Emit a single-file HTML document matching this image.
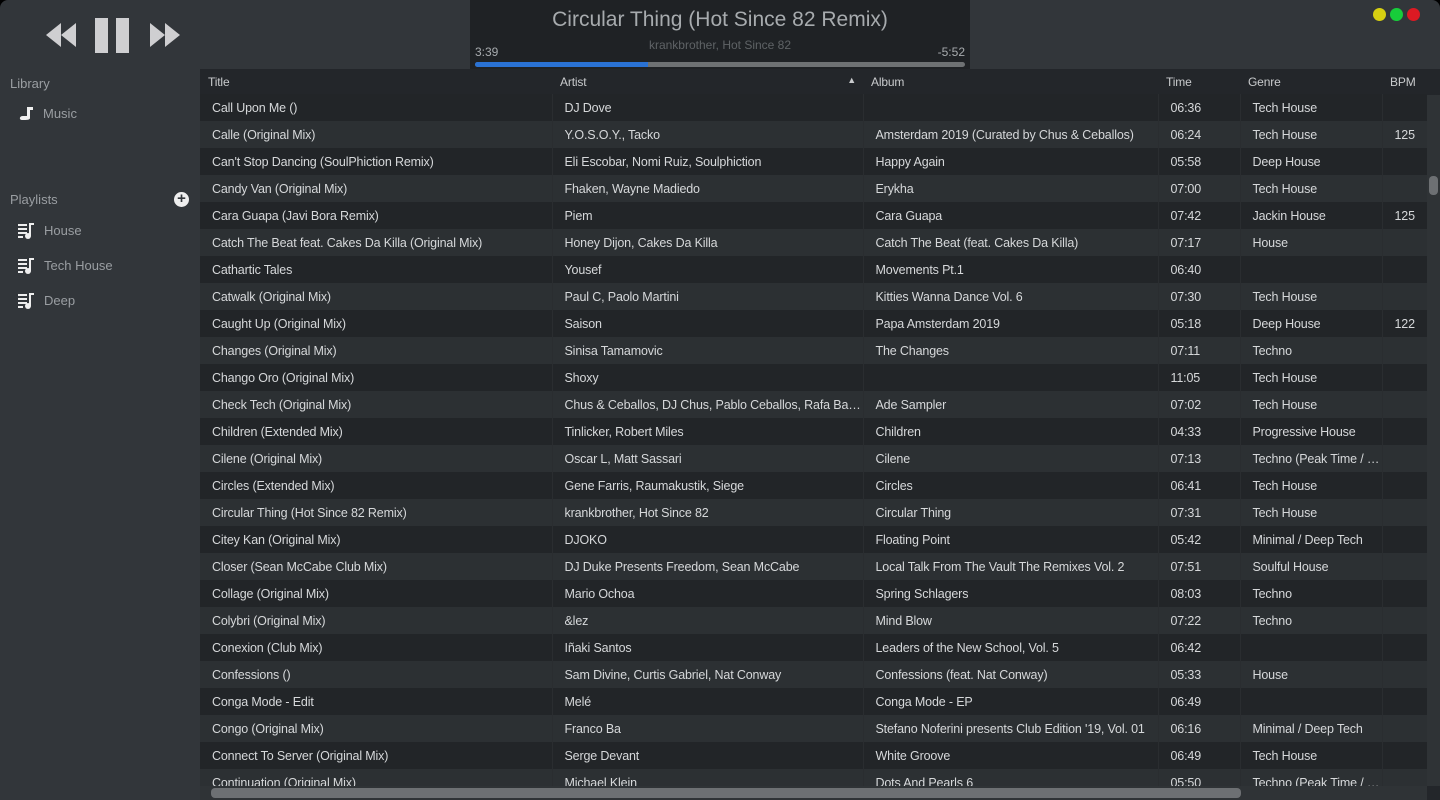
<!DOCTYPE html>
<html><head><meta charset="utf-8"><style>
*{margin:0;padding:0;box-sizing:border-box}
body{width:1440px;height:800px;background:#000;overflow:hidden;font-family:"Liberation Sans",sans-serif;}
#win{position:absolute;left:0;top:0;width:1440px;height:800px;background:#32363a;border-radius:8px 8px 0 0;overflow:hidden}
.side{position:absolute;color:#9a9ea2;font-size:13px}
.now{position:absolute;left:470px;top:0;width:500px;height:69px;background:#1f2225}
table{position:absolute;left:200px;top:69px;border-collapse:collapse;table-layout:fixed;width:1227px}
td,th{height:27px;font-size:12.5px;letter-spacing:-0.15px;color:#d6d8da;white-space:nowrap;overflow:hidden;text-overflow:ellipsis;padding-left:12px;border-left:1px solid #2a2d30;font-weight:normal;text-align:left}
th{height:25px;padding-left:8px;color:#c9cbcd;background:#23262a;border-left:none;font-size:12px}
td:first-child{border-left:none}
tr:nth-child(even) td{background:#222528}
tr:nth-child(odd) td{background:#2c3033}
</style></head><body><div id="win">
<svg style="position:absolute;left:46px;top:18px" width="136" height="36">
<polygon points="0,17 15,5 15,29" fill="#cfcfd1"/><polygon points="15,17 30,5 30,29" fill="#cfcfd1"/>
<rect x="49" y="0" width="13" height="35" fill="#cfcfd1"/><rect x="70" y="0" width="13" height="35" fill="#cfcfd1"/>
<polygon points="104,5 119,17 104,29" fill="#cfcfd1"/><polygon points="119,5 134,17 119,29" fill="#cfcfd1"/>
</svg>
<div class="now">
<div style="position:absolute;left:0;width:500px;top:8px;text-align:center;font-size:21px;color:#a7abae">Circular Thing (Hot Since 82 Remix)</div>
<div style="position:absolute;left:0;width:500px;top:38px;text-align:center;font-size:12px;color:#5f6366">krankbrother, Hot Since 82</div>
<div style="position:absolute;left:5px;top:45px;font-size:12px;color:#a7abae">3:39</div>
<div style="position:absolute;right:5px;top:45px;font-size:12px;color:#a7abae">-5:52</div>
<div style="position:absolute;left:5px;top:62px;width:490px;height:5px;background:#6e7173;border-radius:3px"><div style="width:173px;height:5px;background:#2a72d4;border-radius:3px 0 0 3px"></div></div>
</div>
<div style="position:absolute;left:1373px;top:8px;width:13px;height:13px;border-radius:50%;background:#d6cf11"></div>
<div style="position:absolute;left:1390px;top:8px;width:13px;height:13px;border-radius:50%;background:#17cd3a"></div>
<div style="position:absolute;left:1407px;top:8px;width:13px;height:13px;border-radius:50%;background:#dc1a23"></div>
<div class="side" style="left:10px;top:76px">Library</div>
<svg style="position:absolute;left:18px;top:105px" width="16" height="16"><path d="M4 15 C1 15 1 11 5 11 L9 11 L9 2 L15 2 L15 5 L12 5 L12 13 C12 15 9 15 4 15Z" fill="#f0f0f0"/></svg>
<div class="side" style="left:43px;top:106px">Music</div>
<div class="side" style="left:10px;top:192px">Playlists</div>
<div style="position:absolute;left:174px;top:192px;width:15px;height:15px;border-radius:50%;background:#eee;color:#32363a;font-size:15px;line-height:14px;text-align:center;font-weight:bold">+</div>
<svg width="0" height="0" style="position:absolute"><defs><g id="pl"><rect x="0" y="1" width="9" height="2" fill="#eee"/><rect x="0" y="5" width="9" height="2" fill="#eee"/><rect x="0" y="9" width="9" height="2" fill="#eee"/><rect x="0" y="13" width="5" height="2" fill="#eee"/><rect x="11" y="0" width="2" height="13" fill="#eee"/><rect x="11" y="0" width="5" height="2" fill="#eee"/><circle cx="10" cy="13" r="3" fill="#eee"/></g></defs></svg>
<svg style="position:absolute;left:18px;top:223px" width="17" height="17"><use href="#pl"/></svg>
<div class="side" style="left:44px;top:223px">House</div>
<svg style="position:absolute;left:18px;top:258px" width="17" height="17"><use href="#pl"/></svg>
<div class="side" style="left:44px;top:258px">Tech House</div>
<svg style="position:absolute;left:18px;top:293px" width="17" height="17"><use href="#pl"/></svg>
<div class="side" style="left:44px;top:293px">Deep</div>
<div style="position:absolute;left:200px;top:69px;width:1240px;height:731px;background:#23262a"></div>
<table>
<colgroup><col style="width:352px"><col style="width:311px"><col style="width:295px"><col style="width:82px"><col style="width:142px"><col style="width:45px"></colgroup>
<tr><th>Title</th><th>Artist<span style="float:right;margin-right:7px;font-size:9px">▲</span></th><th>Album</th><th>Time</th><th>Genre</th><th>BPM</th></tr>
<tr><td>Call Upon Me ()</td><td>DJ Dove</td><td></td><td>06:36</td><td>Tech House</td><td></td></tr>
<tr><td>Calle (Original Mix)</td><td>Y.O.S.O.Y., Tacko</td><td>Amsterdam 2019 (Curated by Chus &amp; Ceballos)</td><td>06:24</td><td>Tech House</td><td>125</td></tr>
<tr><td>Can't Stop Dancing (SoulPhiction Remix)</td><td>Eli Escobar, Nomi Ruiz, Soulphiction</td><td>Happy Again</td><td>05:58</td><td>Deep House</td><td></td></tr>
<tr><td>Candy Van (Original Mix)</td><td>Fhaken, Wayne Madiedo</td><td>Erykha</td><td>07:00</td><td>Tech House</td><td></td></tr>
<tr><td>Cara Guapa (Javi Bora Remix)</td><td>Piem</td><td>Cara Guapa</td><td>07:42</td><td>Jackin House</td><td>125</td></tr>
<tr><td>Catch The Beat feat. Cakes Da Killa (Original Mix)</td><td>Honey Dijon, Cakes Da Killa</td><td>Catch The Beat (feat. Cakes Da Killa)</td><td>07:17</td><td>House</td><td></td></tr>
<tr><td>Cathartic Tales</td><td>Yousef</td><td>Movements Pt.1</td><td>06:40</td><td></td><td></td></tr>
<tr><td>Catwalk (Original Mix)</td><td>Paul C, Paolo Martini</td><td>Kitties Wanna Dance Vol. 6</td><td>07:30</td><td>Tech House</td><td></td></tr>
<tr><td>Caught Up (Original Mix)</td><td>Saison</td><td>Papa Amsterdam 2019</td><td>05:18</td><td>Deep House</td><td>122</td></tr>
<tr><td>Changes (Original Mix)</td><td>Sinisa Tamamovic</td><td>The Changes</td><td>07:11</td><td>Techno</td><td></td></tr>
<tr><td>Chango Oro (Original Mix)</td><td>Shoxy</td><td></td><td>11:05</td><td>Tech House</td><td></td></tr>
<tr><td>Check Tech (Original Mix)</td><td>Chus &amp; Ceballos, DJ Chus, Pablo Ceballos, Rafa Barrios</td><td>Ade Sampler</td><td>07:02</td><td>Tech House</td><td></td></tr>
<tr><td>Children (Extended Mix)</td><td>Tinlicker, Robert Miles</td><td>Children</td><td>04:33</td><td>Progressive House</td><td></td></tr>
<tr><td>Cilene (Original Mix)</td><td>Oscar L, Matt Sassari</td><td>Cilene</td><td>07:13</td><td>Techno (Peak Time / Driving)</td><td></td></tr>
<tr><td>Circles (Extended Mix)</td><td>Gene Farris, Raumakustik, Siege</td><td>Circles</td><td>06:41</td><td>Tech House</td><td></td></tr>
<tr><td>Circular Thing (Hot Since 82 Remix)</td><td>krankbrother, Hot Since 82</td><td>Circular Thing</td><td>07:31</td><td>Tech House</td><td></td></tr>
<tr><td>Citey Kan (Original Mix)</td><td>DJOKO</td><td>Floating Point</td><td>05:42</td><td>Minimal / Deep Tech</td><td></td></tr>
<tr><td>Closer (Sean McCabe Club Mix)</td><td>DJ Duke Presents Freedom, Sean McCabe</td><td>Local Talk From The Vault The Remixes Vol. 2</td><td>07:51</td><td>Soulful House</td><td></td></tr>
<tr><td>Collage (Original Mix)</td><td>Mario Ochoa</td><td>Spring Schlagers</td><td>08:03</td><td>Techno</td><td></td></tr>
<tr><td>Colybri (Original Mix)</td><td>&amp;lez</td><td>Mind Blow</td><td>07:22</td><td>Techno</td><td></td></tr>
<tr><td>Conexion (Club Mix)</td><td>Iñaki Santos</td><td>Leaders of the New School, Vol. 5</td><td>06:42</td><td></td><td></td></tr>
<tr><td>Confessions ()</td><td>Sam Divine, Curtis Gabriel, Nat Conway</td><td>Confessions (feat. Nat Conway)</td><td>05:33</td><td>House</td><td></td></tr>
<tr><td>Conga Mode - Edit</td><td>Melé</td><td>Conga Mode - EP</td><td>06:49</td><td></td><td></td></tr>
<tr><td>Congo (Original Mix)</td><td>Franco Ba</td><td>Stefano Noferini presents Club Edition '19, Vol. 01</td><td>06:16</td><td>Minimal / Deep Tech</td><td></td></tr>
<tr><td>Connect To Server (Original Mix)</td><td>Serge Devant</td><td>White Groove</td><td>06:49</td><td>Tech House</td><td></td></tr>
<tr><td>Continuation (Original Mix)</td><td>Michael Klein</td><td>Dots And Pearls 6</td><td>05:50</td><td>Techno (Peak Time / Driving)</td><td></td></tr>
</table>
<div style="position:absolute;left:1427px;top:95px;width:13px;height:691px;background:#2f3336"></div>
<div style="position:absolute;left:1429px;top:176px;width:9px;height:19px;border-radius:4px;background:#6d7073"></div>
<div style="position:absolute;left:200px;top:786px;width:1227px;height:14px;background:#2f3336"></div>
<div style="position:absolute;left:211px;top:788px;width:1030px;height:10px;border-radius:4px;background:#6d7073"></div>
<div style="position:absolute;left:1427px;top:786px;width:13px;height:14px;background:#23262a"></div>
</div></body></html>
